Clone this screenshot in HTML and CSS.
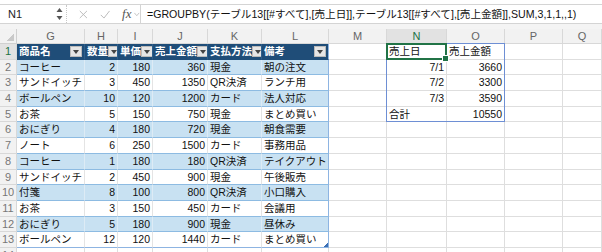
FILE: index.html
```html
<!DOCTYPE html>
<html lang="ja">
<head>
  <meta charset="UTF-8" />
  <title>GROUPBY</title>
  <link rel="stylesheet" href="styles.css">
</head>
<body>
<div class="formula-bar">
  <div class="name-box">N1</div>
  <div class="spin">
    <svg width="7" height="14" viewBox="0 0 7 14"><path d="M3.5 1 L6.5 5 H0.5 Z M3.5 13 L6.5 9 H0.5 Z" fill="#555"/></svg>
  </div>
  <div class="fx-tools">
    <svg width="11" height="11" viewBox="0 0 11 11"><path d="M1 1 L10 10 M10 1 L1 10" stroke="#b8b8b8" stroke-width="1.2"/></svg>
    <svg width="13" height="11" viewBox="0 0 13 11"><path d="M1 6 L5 10 L12 1" stroke="#b8b8b8" stroke-width="1.2" fill="none"/></svg>
    <span class="fx">fx</span>
    <svg width="7" height="5" viewBox="0 0 7 5"><path d="M0.5 0.5 L3.5 4 L6.5 0.5" stroke="#b8b8b8" fill="none"/></svg>
  </div>
  <div class="formula">=GROUPBY(テーブル13[[#すべて],[売上日]],テーブル13[[#すべて],[売上金額]],SUM,3,1,1,,1)</div>
</div>
<div class="gap"></div>
<div class="sheet-wrap">
  <div class="sheet" id="sheet"></div>
  <!-- marks drawn over the cells: spill range, active cell, table resize handle -->
  <div class="sheet overlay">
    <div class="spill"></div>
    <div class="selected"></div>
    <div class="resize"></div>
  </div>
</div>

<script>
// table rows: 商品名, 数量, 単価, 売上金額, 支払方法, 備考
const items = [
  ["コーヒー", 2, 180, 360, "現金", "朝の注文"],
  ["サンドイッチ", 3, 450, 1350, "QR決済", "ランチ用"],
  ["ボールペン", 10, 120, 1200, "カード", "法人対応"],
  ["お茶", 5, 150, 750, "現金", "まとめ買い"],
  ["おにぎり", 4, 180, 720, "現金", "朝食需要"],
  ["ノート", 6, 250, 1500, "カード", "事務用品"],
  ["コーヒー", 1, 180, 180, "QR決済", "テイクアウト"],
  ["サンドイッチ", 2, 450, 900, "現金", "午後販売"],
  ["付箋", 8, 100, 800, "QR決済", "小口購入"],
  ["お茶", 3, 150, 450, "カード", "会議用"],
  ["おにぎり", 5, 180, 900, "現金", "昼休み"],
  ["ボールペン", 12, 120, 1440, "カード", "まとめ買い"]
];
const heads = ["商品名", "数量", "単価", "売上金額", "支払方法", "備考"];
// spill result of GROUPBY in N1:O5
const spill = [
  ["売上日", "売上金額"],
  ["7/1", 3660],
  ["7/2", 3300],
  ["7/3", 3590],
  ["合計", 10550]
];
const letters = ["G", "H", "I", "J", "K", "L", "M", "N", "O", "P", "Q"];

const sheet = document.getElementById("sheet");
function cell(cls, text) {
  const d = document.createElement("div");
  d.className = "cell " + cls;
  if (text !== undefined) d.textContent = text;
  sheet.appendChild(d);
  return d;
}

// column headers
cell("corner");
letters.forEach(l => cell("col-head" + (l === "N" ? " active" : ""), l));

for (let r = 1; r <= 14; r++) {
  cell("row-head" + (r === 1 ? " active" : ""), r);
  for (let c = 0; c < 11; c++) {
    let cls = "", text = "";
    if (c < 6 && r <= 13) {
      if (r === 1) {
        const d = cell("t-head" + (c === 5 ? " t-last" : ""));
        const s = document.createElement("span");
        s.textContent = heads[c];
        d.appendChild(s);
        const b = document.createElement("span");
        b.className = "filter";
        d.appendChild(b);
        continue;
      }
      const v = items[r - 2][c];
      cls = (r % 2 === 0 ? "t-band" : "t-row");
      if (typeof v === "number") cls += " num";
      if (c === 5) cls += " t-last";
      if (r === 13) cls += " t-end";
      text = v;
    } else if ((c === 7 || c === 8) && r <= 5) {
      const v = spill[r - 1][c - 7];
      // dates and sums right-aligned, labels left
      if (r > 1 && !(r === 5 && c === 7)) cls = "num";
      text = v;
    }
    cell(cls, text);
  }
}
</script>
</body>
</html>
```

FILE: styles.css
```css
body {
  margin: 0;
  font-family: "Liberation Sans", "Noto Sans CJK JP", sans-serif;
  background: #fff;
  overflow: hidden;
}
.formula-bar {
  display: flex;
  align-items: stretch;
  height: 18px;
  margin-top: 4px;
  border-top: 1px solid #d4d4d4;
  border-bottom: 1px solid #d4d4d4;
  font-size: 11px;
}
.name-box {
  width: 56px;
  padding-left: 8px;
  box-sizing: border-box;
  line-height: 18px;
  color: #222;
}
.spin {
  width: 10px;
  display: flex;
  align-items: center;
  border-right: 1px dotted #c8c8c8;
}
.fx-tools {
  width: 73px;
  display: flex;
  align-items: center;
  gap: 12px;
  padding-left: 12px;
  box-sizing: border-box;
}
.fx-tools svg:last-child {
  margin-left: -9px;
}
.fx {
  font-family: "Liberation Serif", serif;
  font-style: italic;
  font-size: 13px;
  color: #555;
}
.formula {
  flex: 1;
  border-left: 1px solid #d4d4d4;
  padding-left: 6px;
  line-height: 18px;
  font-size: 10.6px;
  color: #111;
  white-space: nowrap;
  overflow: hidden;
}
.gap {
  height: 5px;
  background: #f4f4f4;
}
.sheet-wrap {
  position: relative;
}
.sheet {
  display: grid;
  grid-template-columns: 17px 68px 33px 35px 55px 54px 67px 58px 60px 58px 58px 1fr;
  grid-template-rows: 15px;
  grid-auto-rows: 15.7px;
  font-size: 10.5px;
  color: #111;
}
.overlay {
  position: absolute;
  inset: 0;
  pointer-events: none;
}
.cell {
  box-sizing: border-box;
  border-right: 1px solid #dedede;
  border-bottom: 1px solid #dedede;
  padding: 0 2px;
  line-height: 14px;
  white-space: nowrap;
  overflow: hidden;
}
.num {
  text-align: right;
}
.corner {
  background: #f2f2f2 linear-gradient(135deg, transparent 60%, #c9c9c9 60%) no-repeat right 2px bottom 2px / 9px 9px;
  border-color: #d0d0d0;
}
.col-head {
  background: #f2f2f2;
  color: #666;
  text-align: center;
  border-color: #d8d8d8;
  font-size: 11px;
}
.row-head {
  background: #f2f2f2;
  color: #777;
  text-align: center;
  padding: 0;
  border-color: #d8d8d8;
  font-size: 11px;
}
.active {
  background: #e2e2e2;
  color: #217346;
}
.t-head {
  background: #1f4d78;
  color: #fff;
  font-weight: bold;
  display: flex;
  align-items: center;
  justify-content: space-between;
  border-right: 1px solid #2d5f8c;
  border-bottom: 1px solid #1f4d78;
}
.filter {
  width: 12px;
  height: 11px;
  background: #e6e6e6;
  border: 1px solid #bbb;
  box-sizing: border-box;
  position: relative;
  flex: none;
}
.filter::after {
  content: "";
  position: absolute;
  left: 2px;
  top: 3px;
  border-left: 3.5px solid transparent;
  border-right: 3.5px solid transparent;
  border-top: 4px solid #444;
}
.t-band {
  background: #c8e1f2;
  border-right-color: #ddebf5;
  border-bottom-color: #8dbbe2;
}
.t-row {
  background: #fff;
  border-right-color: #e4e4e4;
  border-bottom-color: #8dbbe2;
}
.t-last {
  border-right: 1px solid #8db4e2;
}
.t-end {
  border-bottom: 1px solid #8db4e2;
}
.spill {
  grid-column: 9 / 11;
  grid-row: 2 / 7;
  border: 1px solid #6e8fd4;
  margin: -1px 0 0 -1px;
}
.selected {
  grid-column: 9 / 10;
  grid-row: 2 / 3;
  border: 2px solid #217346;
  margin: -1px 0 0 -1px;
  position: relative;
}
.selected::after {
  content: "";
  position: absolute;
  right: -4px;
  bottom: -4px;
  width: 5px;
  height: 5px;
  background: #217346;
  border: 1px solid #fff;
}
.resize {
  grid-column: 7 / 8;
  grid-row: 14 / 15;
  justify-self: end;
  align-self: end;
  width: 4px;
  height: 4px;
  margin: 0 1px 1px 0;
  background: linear-gradient(135deg, transparent 50%, #3a6fb5 50%);
}
```
